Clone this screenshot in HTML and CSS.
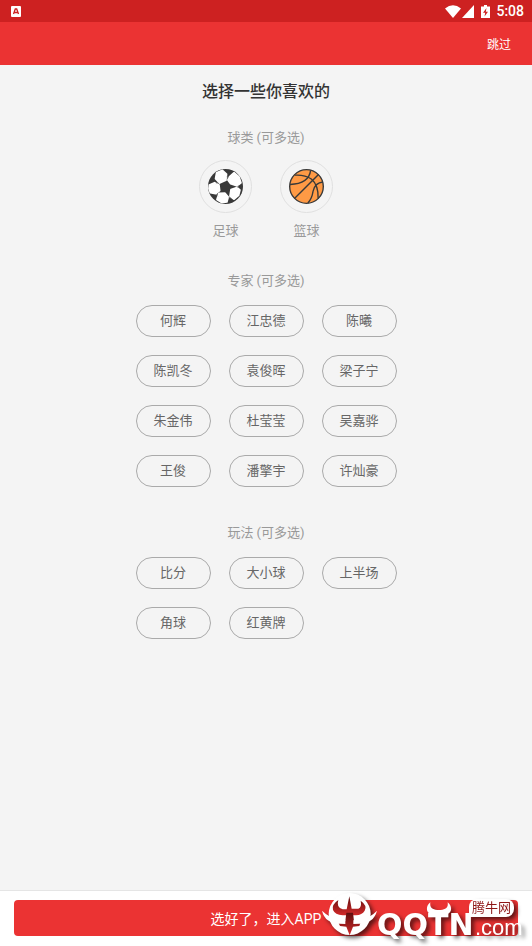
FILE: index.html
```html
<!DOCTYPE html>
<html lang="zh-CN">
<head>
    <meta charset="UTF-8">
    <meta name="viewport" content="width=device-width, initial-scale=1.0">
    <title>选择一些你喜欢的</title>
    <link rel="stylesheet" href="styles.css">
</head>
<body>
    <div class="status-bar">
        <svg class="app-icon" width="10" height="11" viewBox="0 0 10 11">
            <rect width="10" height="11" rx="1" fill="#fff"/>
            <path d="M2.5 8 4.3 3h1.4l1.8 5M3.5 6.5h3" fill="none" stroke="#cd2121" stroke-width="1.3"/>
        </svg>
        <div class="status-icons">
            <svg width="16" height="13" viewBox="0 0 16 13"><path d="M0 3.5Q8-3 16 3.5L8 13z" fill="#fff"/></svg>
            <svg width="12" height="13" viewBox="0 0 12 13"><path d="M12 0v13H0z" fill="#fff"/></svg>
            <svg class="battery" width="9" height="13" viewBox="0 0 9 13">
                <path d="M3 0h3v1.5h3V13H0V1.5h3z" fill="#fff"/>
                <path d="M5.5 3 2 7.8h2.2L3.5 11.5 7 6.7H4.8z" fill="#cd2121"/>
            </svg>
            <span class="time">5:08</span>
        </div>
    </div>
    <header class="header">
        <a href="#" class="skip">跳过</a>
    </header>

    <main class="content">
        <h1>选择一些你喜欢的</h1>

        <section class="balls">
            <h2>球类 (可多选)</h2>
            <div class="ball-list">
                <button type="button" class="ball">
                    <span class="ball-icon">
                        <svg width="35" height="35" viewBox="0 0 102 102">
                            <circle cx="51" cy="51" r="51" fill="#393939"/>
                            <g fill="#fff" stroke="#fff" stroke-width="5" stroke-linejoin="round">
                                <path d="M25 11 42 4 54 15 52 33 34 41 22 28z"/>
                                <path d="M63 22 76 11 90 23 96 40 85 49 66 43 58 32z"/>
                                <path d="M4 47 19 40 32 47 34 63 22 72 7 69 3 57z"/>
                                <path d="M67 60 84 54 93 61 89 77 76 88 64 79z"/>
                                <path d="M32 71 49 70 59 82 55 96 40 98 26 89z"/>
                            </g>
                            <path d="m54 23 6 2M29 39l-5 5M89 47l-3 8M60 83l7 1M24 73l5 7" stroke="#999" stroke-width="2"/>
                        </svg>
                    </span>
                    足球
                </button>
                <button type="button" class="ball">
                    <span class="ball-icon">
                        <svg width="35" height="35" viewBox="0 0 102 102">
                            <circle cx="51" cy="51" r="49" fill="#ff9a45"/>
                            <g fill="none" stroke="#393939" stroke-width="4">
                                <circle cx="51" cy="51" r="49"/>
                                <path d="M86 16 16 86"/>
                                <path d="M3 45Q58 43 63 4"/>
                                <path d="M17 18Q45 16 65 29 86 46 85 86"/>
                                <path d="M99 38Q76 40 70 65 67 86 55 99"/>
                            </g>
                        </svg>
                    </span>
                    篮球
                </button>
            </div>
        </section>

        <section class="experts">
            <h2>专家 (可多选)</h2>
            <div class="tags">
                <button type="button">何辉</button>
                <button type="button">江忠德</button>
                <button type="button">陈曦</button>
                <button type="button">陈凯冬</button>
                <button type="button">袁俊晖</button>
                <button type="button">梁子宁</button>
                <button type="button">朱金伟</button>
                <button type="button">杜莹莹</button>
                <button type="button">吴嘉骅</button>
                <button type="button">王俊</button>
                <button type="button">潘擎宇</button>
                <button type="button">许灿豪</button>
            </div>
        </section>

        <section class="plays">
            <h2>玩法 (可多选)</h2>
            <div class="tags">
                <button type="button">比分</button>
                <button type="button">大小球</button>
                <button type="button">上半场</button>
                <button type="button">角球</button>
                <button type="button">红黄牌</button>
            </div>
        </section>
    </main>

    <footer class="footer">
        <button type="button" class="enter-btn">选好了，进入APP</button>
        <!-- site logo over the corner of the button -->
        <div class="watermark">
            <svg class="bull" width="56" height="48" viewBox="0 0 168 144">
                <defs>
                    <linearGradient id="bull-red" x1="0" y1="0" x2="0" y2="1">
                        <stop offset="0" stop-color="#5e0d0d"/>
                        <stop offset="1" stop-color="#d42a2a"/>
                    </linearGradient>
                </defs>
                <circle cx="86" cy="66" r="63" fill="#fff"/>
                <g fill="url(#bull-red)">
                    <path d="M52 24Q45 46 65 52H77L85 13 92 50H112Q123 45 119 26 140 41 131 56 123 69 105 70H65Q42 68 36 54 31 38 52 24z"/>
                    <path d="M76 62H96L99 88 121 85 115 102 96 104 86 130 76 104 57 102 49 85 73 88z"/>
                </g>
                <path d="M3 56Q27 80 60 83L73 85V96L56 95Q12 94 3 56zM168 56Q146 80 113 83L97 85V96L116 95Q158 94 168 56z" fill="#fff"/>
            </svg>
            <span class="brand">QQTN</span>
            <svg class="horns" width="26" height="14" viewBox="0 0 78 42">
                <path d="M13 1C-4 15 1 37 22 38h34C77 37 82 15 65 1c3 19-10 23-26 23S10 20 13 1" fill="#fff"/>
            </svg>
            <span class="domain">.com</span>
            <span class="bubble">腾牛网</span>
        </div>
    </footer>
</body>
</html>
```
FILE: styles.css
```css
* {
    box-sizing: border-box;
    margin: 0;
}
body {
    min-height: 100vh;
    display: flex;
    flex-direction: column;
    background: #f4f4f4;
    font-family: Roboto, "Noto Sans CJK SC", sans-serif;
    font-size: 13px;
    color: #666;
}
button {
    font: inherit;
    color: inherit;
    background: none;
    border: none;
    padding: 0;
    cursor: pointer;
}
svg {
    display: block;
}
.status-bar {
    height: 22px;
    padding: 0 8px 0 11px;
    display: flex;
    align-items: center;
    justify-content: space-between;
    background: #cd2121;
    color: white;
}
.status-icons {
    display: flex;
    align-items: center;
    gap: 1px;
}
.battery {
    margin: 0 5px 0 6px;
}
.time {
    font-size: 14px;
    font-weight: 500;
}
.header {
    height: 43px;
    padding: 0 21px;
    display: flex;
    align-items: center;
    justify-content: flex-end;
    background: #eb3333;
}
.skip {
    color: white;
    font-size: 12px;
    text-decoration: none;
}
.content {
    flex: 1;
    display: flex;
    flex-direction: column;
    align-items: center;
    padding-top: 15px;
}
h1 {
    font-size: 16px;
    font-weight: 500;
    line-height: 24px;
    color: #333;
}
h2 {
    font-size: 13px;
    font-weight: normal;
    line-height: 20px;
    color: #999;
    text-align: center;
}
.balls {
    margin-top: 24px;
}
.ball-list {
    display: flex;
    justify-content: center;
    gap: 28px;
    margin-top: 12px;
}
.ball {
    display: flex;
    flex-direction: column;
    align-items: center;
    gap: 8px;
    line-height: 20px;
    color: #999;
}
.ball-icon {
    width: 53px;
    height: 53px;
    display: flex;
    align-items: center;
    justify-content: center;
    border: 1px solid #e0e0e0;
    border-radius: 50%;
}
.experts {
    margin-top: 30px;
}
.plays {
    margin-top: 36px;
}
.tags {
    display: grid;
    grid-template-columns: repeat(3, 75px);
    gap: 18px;
    margin-top: 14px;
}
.tags button {
    height: 32px;
    border: 1px solid #aaa;
    border-radius: 16px;
    line-height: 30px;
}
.footer {
    position: relative;
    padding: 9px 14px 10px;
    background: white;
    border-top: 1px solid #e5e5e5;
}
.enter-btn {
    display: block;
    width: 100%;
    height: 36px;
    border-radius: 4px;
    background: #eb3333;
    color: white;
    font-size: 14px;
}
.watermark {
    position: absolute;
    right: 5px;
    bottom: 0;
    width: 206px;
    height: 54px;
    color: white;
    filter: drop-shadow(3px 3px 2px rgba(0, 0, 0, 0.6));
    pointer-events: none;
}
.watermark > * {
    position: absolute;
}
.bull {
    left: 0;
    top: 0;
}
.brand {
    left: 56px;
    top: 15px;
    font-family: "DejaVu Sans", sans-serif;
    font-size: 30px;
    font-weight: bold;
    line-height: 36px;
}
.horns {
    left: 105px;
    top: 10px;
}
.domain {
    left: 154px;
    top: 23px;
    font-family: "Liberation Sans", sans-serif;
    font-size: 22px;
    line-height: 26px;
}
.bubble {
    left: 148px;
    top: 7px;
    padding: 0 3px;
    border-radius: 8px 8px 8px 2px;
    background: white;
    color: #8e1717;
    font-size: 13px;
    line-height: 18px;
}
```
